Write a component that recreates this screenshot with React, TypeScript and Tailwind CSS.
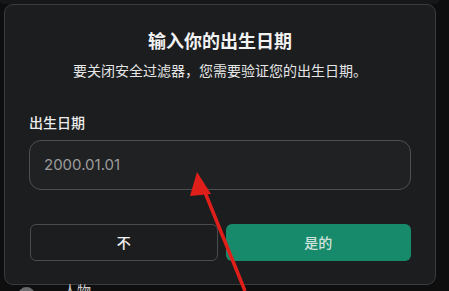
import React from "react";

export default function App() {
  const font = { fontFamily: '"Noto Sans CJK SC", "Noto Sans", sans-serif' };
  return (
    <div className="relative w-[449px] h-[291px] overflow-hidden bg-[#0e0e0f]" style={font}>
      <div className="h-[4px] mr-[10px] rounded-b-[8px] bg-[#161718]" />
      <div className="flex">
        <div className="ml-[4px] w-[432px] h-[281px] rounded-[9px] border border-[#3a3b3d] bg-[#1c1d1f] px-[24px] pt-[23px] flex flex-col">
          <div className="text-center text-[18px] leading-[24px] font-bold text-[#f2f2f2]">输入你的出生日期</div>
          <div className="mt-[8px] text-center text-[14px] leading-[20px] text-[#e6e6e6]">
            要关闭安全过滤器，您需要验证您的出生日期。
          </div>
          <div className="mt-[32px] text-[14px] leading-[20px] font-medium text-[#ececec]">出生日期</div>
          <div className="mt-[8px] h-[50px] rounded-[12px] border border-[#4e4f52] bg-[#202123] flex items-center px-[14px]">
            <span className="text-[15px] text-[#9c9c9c]" style={{ fontFamily: '"Inter", "Noto Sans", sans-serif' }}>2000.01.01</span>
          </div>
          <div className="mt-[34px] flex gap-[8px] pl-[1px]">
            <div className="flex-1 h-[37px] rounded-[6px] border border-[#4a4b4e] flex items-center justify-center text-[14px] font-medium text-[#f2f2f2]">
              不
            </div>
            <div className="flex-1 h-[37px] rounded-[6px] bg-[#178a6b] flex items-center justify-center text-[14px] font-medium text-[#cfe3dc]">
              是的
            </div>
          </div>
        </div>
      </div>
      <div className="flex items-start gap-[28px] pl-[18px] -mt-[0px]">
        <div className="w-[17px] h-[17px] rounded-full bg-[#6a6b6d] mt-[2px]" />
        <div className="text-[14px] leading-[20px] text-[#cfcfcf] -mt-[5px]">人物</div>
      </div>
      <svg className="absolute left-0 top-0 pointer-events-none" width="449" height="291" viewBox="0 0 449 291">
        <line x1="245" y1="291" x2="202" y2="185" stroke="#e01f1a" strokeWidth="3.5" />
        <polygon points="197,172 211,194 190,196" fill="#e01f1a" transform="rotate(0)" />
      </svg>
    </div>
  );
}
